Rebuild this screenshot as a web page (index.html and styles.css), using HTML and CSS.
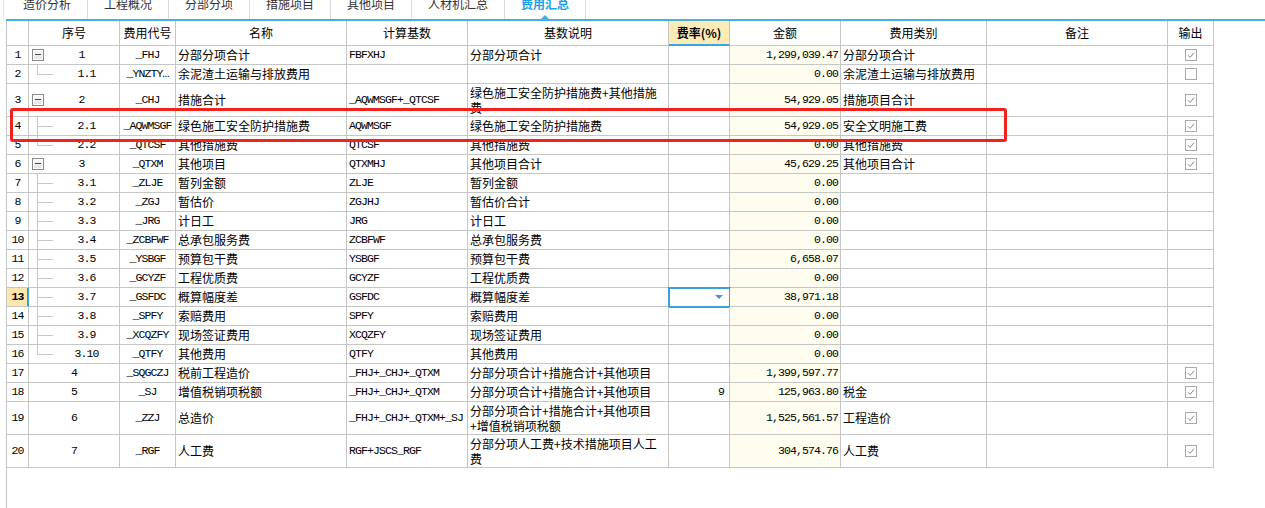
FILE: index.html
```html
<!DOCTYPE html>
<html lang="zh">
<head>
<meta charset="utf-8">
<title>费用汇总</title>
<link rel="stylesheet" href="styles.css">
</head>
<body>
<div class="tabs">
  <div class="tab first"><span>造价分析</span></div>
  <div class="tab"><span>工程概况</span></div>
  <div class="tab"><span>分部分项</span></div>
  <div class="tab"><span>措施项目</span></div>
  <div class="tab"><span>其他项目</span></div>
  <div class="tab"><span>人材机汇总</span></div>
  <div class="tab active"><span>费用汇总</span></div>
</div>
<div class="bar"></div>
<div class="panel">
  <div class="row hdr">
    <div></div><div>序号</div><div>费用代号</div><div>名称</div><div>计算基数</div><div>基数说明</div><div class="rate-h">费率(%)</div><div>金额</div><div>费用类别</div><div>备注</div><div>输出</div>
  </div>

  <div class="row">
    <div class="num m">1</div><div class="seq"><i class="exp"></i><span class="m">1</span></div><div class="c m">_FHJ</div><div>分部分项合计</div><div class="m">FBFXHJ</div><div>分部分项合计</div><div></div><div class="amt m">1,299,039.47</div><div>分部分项合计</div><div></div><div class="chk"><svg width="12" height="12" viewBox="0 0 12 12"><rect x="0.5" y="0.5" width="11" height="11" fill="#fff" stroke="#a9a9a9"/><path d="M3 6.2 L5.2 8.4 L9 3.6" fill="none" stroke="#8c8c8c"/></svg></div>
  </div>
  <div class="row">
    <div class="num m">2</div><div class="seq"><i class="br last"></i><span class="m">1.1</span></div><div class="c m">_YNZTY…</div><div>余泥渣土运输与排放费用</div><div class="m"></div><div></div><div></div><div class="amt m">0.00</div><div>余泥渣土运输与排放费用</div><div></div><div class="chk"><svg width="12" height="12" viewBox="0 0 12 12"><rect x="0.5" y="0.5" width="11" height="11" fill="#fff" stroke="#a9a9a9"/></svg></div>
  </div>
  <div class="row tall">
    <div class="num m">3</div><div class="seq"><i class="exp"></i><span class="m">2</span></div><div class="c m">_CHJ</div><div>措施合计</div><div class="m">_AQWMSGF+_QTCSF</div><div class="wrap">绿色施工安全防护措施费+其他措施<br>费</div><div></div><div class="amt m">54,929.05</div><div>措施项目合计</div><div></div><div class="chk"><svg width="12" height="12" viewBox="0 0 12 12"><rect x="0.5" y="0.5" width="11" height="11" fill="#fff" stroke="#a9a9a9"/><path d="M3 6.2 L5.2 8.4 L9 3.6" fill="none" stroke="#8c8c8c"/></svg></div>
  </div>
  <div class="row">
    <div class="num m">4</div><div class="seq"><i class="br"></i><span class="m">2.1</span></div><div class="c m">_AQWMSGF</div><div>绿色施工安全防护措施费</div><div class="m">AQWMSGF</div><div>绿色施工安全防护措施费</div><div></div><div class="amt m">54,929.05</div><div>安全文明施工费</div><div></div><div class="chk"><svg width="12" height="12" viewBox="0 0 12 12"><rect x="0.5" y="0.5" width="11" height="11" fill="#fff" stroke="#a9a9a9"/><path d="M3 6.2 L5.2 8.4 L9 3.6" fill="none" stroke="#8c8c8c"/></svg></div>
  </div>
  <div class="row">
    <div class="num m">5</div><div class="seq"><i class="br last"></i><span class="m">2.2</span></div><div class="c m">_QTCSF</div><div>其他措施费</div><div class="m">QTCSF</div><div>其他措施费</div><div></div><div class="amt m">0.00</div><div>其他措施费</div><div></div><div class="chk"><svg width="12" height="12" viewBox="0 0 12 12"><rect x="0.5" y="0.5" width="11" height="11" fill="#fff" stroke="#a9a9a9"/><path d="M3 6.2 L5.2 8.4 L9 3.6" fill="none" stroke="#8c8c8c"/></svg></div>
  </div>
  <div class="row">
    <div class="num m">6</div><div class="seq"><i class="exp"></i><span class="m">3</span></div><div class="c m">_QTXM</div><div>其他项目</div><div class="m">QTXMHJ</div><div>其他项目合计</div><div></div><div class="amt m">45,629.25</div><div>其他项目合计</div><div></div><div class="chk"><svg width="12" height="12" viewBox="0 0 12 12"><rect x="0.5" y="0.5" width="11" height="11" fill="#fff" stroke="#a9a9a9"/><path d="M3 6.2 L5.2 8.4 L9 3.6" fill="none" stroke="#8c8c8c"/></svg></div>
  </div>
  <div class="row">
    <div class="num m">7</div><div class="seq"><i class="br"></i><span class="m">3.1</span></div><div class="c m">_ZLJE</div><div>暂列金额</div><div class="m">ZLJE</div><div>暂列金额</div><div></div><div class="amt m">0.00</div><div></div><div></div><div></div>
  </div>
  <div class="row">
    <div class="num m">8</div><div class="seq"><i class="br"></i><span class="m">3.2</span></div><div class="c m">_ZGJ</div><div>暂估价</div><div class="m">ZGJHJ</div><div>暂估价合计</div><div></div><div class="amt m">0.00</div><div></div><div></div><div></div>
  </div>
  <div class="row">
    <div class="num m">9</div><div class="seq"><i class="br"></i><span class="m">3.3</span></div><div class="c m">_JRG</div><div>计日工</div><div class="m">JRG</div><div>计日工</div><div></div><div class="amt m">0.00</div><div></div><div></div><div></div>
  </div>
  <div class="row">
    <div class="num m">10</div><div class="seq"><i class="br"></i><span class="m">3.4</span></div><div class="c m">_ZCBFWF</div><div>总承包服务费</div><div class="m">ZCBFWF</div><div>总承包服务费</div><div></div><div class="amt m">0.00</div><div></div><div></div><div></div>
  </div>
  <div class="row">
    <div class="num m">11</div><div class="seq"><i class="br"></i><span class="m">3.5</span></div><div class="c m">_YSBGF</div><div>预算包干费</div><div class="m">YSBGF</div><div>预算包干费</div><div></div><div class="amt m">6,658.07</div><div></div><div></div><div></div>
  </div>
  <div class="row">
    <div class="num m">12</div><div class="seq"><i class="br"></i><span class="m">3.6</span></div><div class="c m">_GCYZF</div><div>工程优质费</div><div class="m">GCYZF</div><div>工程优质费</div><div></div><div class="amt m">0.00</div><div></div><div></div><div></div>
  </div>
  <div class="row">
    <div class="num m cur">13</div><div class="seq"><i class="br"></i><span class="m">3.7</span></div><div class="c m">_GSFDC</div><div>概算幅度差</div><div class="m">GSFDC</div><div>概算幅度差</div><div class="sel"><i class="dd"></i></div><div class="amt m">38,971.18</div><div></div><div></div><div></div>
  </div>
  <div class="row">
    <div class="num m">14</div><div class="seq"><i class="br"></i><span class="m">3.8</span></div><div class="c m">_SPFY</div><div>索赔费用</div><div class="m">SPFY</div><div>索赔费用</div><div></div><div class="amt m">0.00</div><div></div><div></div><div></div>
  </div>
  <div class="row">
    <div class="num m">15</div><div class="seq"><i class="br"></i><span class="m">3.9</span></div><div class="c m">_XCQZFY</div><div>现场签证费用</div><div class="m">XCQZFY</div><div>现场签证费用</div><div></div><div class="amt m">0.00</div><div></div><div></div><div></div>
  </div>
  <div class="row">
    <div class="num m">16</div><div class="seq"><i class="br last"></i><span class="m">3.10</span></div><div class="c m">_QTFY</div><div>其他费用</div><div class="m">QTFY</div><div>其他费用</div><div></div><div class="amt m">0.00</div><div></div><div></div><div></div>
  </div>
  <div class="row">
    <div class="num m">17</div><div class="seq"><span class="m">4</span></div><div class="c m">_SQGCZJ</div><div>税前工程造价</div><div class="m">_FHJ+_CHJ+_QTXM</div><div>分部分项合计+措施合计+其他项目</div><div></div><div class="amt m">1,399,597.77</div><div></div><div></div><div class="chk"><svg width="12" height="12" viewBox="0 0 12 12"><rect x="0.5" y="0.5" width="11" height="11" fill="#fff" stroke="#a9a9a9"/><path d="M3 6.2 L5.2 8.4 L9 3.6" fill="none" stroke="#8c8c8c"/></svg></div>
  </div>
  <div class="row">
    <div class="num m">18</div><div class="seq"><span class="m">5</span></div><div class="c m">_SJ</div><div>增值税销项税额</div><div class="m">_FHJ+_CHJ+_QTXM</div><div>分部分项合计+措施合计+其他项目</div><div class="r m rate">9</div><div class="amt m">125,963.80</div><div>税金</div><div></div><div class="chk"><svg width="12" height="12" viewBox="0 0 12 12"><rect x="0.5" y="0.5" width="11" height="11" fill="#fff" stroke="#a9a9a9"/><path d="M3 6.2 L5.2 8.4 L9 3.6" fill="none" stroke="#8c8c8c"/></svg></div>
  </div>
  <div class="row tall">
    <div class="num m">19</div><div class="seq"><span class="m">6</span></div><div class="c m">_ZZJ</div><div>总造价</div><div class="m">_FHJ+_CHJ+_QTXM+_SJ</div><div class="wrap">分部分项合计+措施合计+其他项目<br>+增值税销项税额</div><div></div><div class="amt m">1,525,561.57</div><div>工程造价</div><div></div><div class="chk"><svg width="12" height="12" viewBox="0 0 12 12"><rect x="0.5" y="0.5" width="11" height="11" fill="#fff" stroke="#a9a9a9"/><path d="M3 6.2 L5.2 8.4 L9 3.6" fill="none" stroke="#8c8c8c"/></svg></div>
  </div>
  <div class="row tall">
    <div class="num m">20</div><div class="seq"><span class="m">7</span></div><div class="c m">_RGF</div><div>人工费</div><div class="m">RGF+JSCS_RGF</div><div class="wrap">分部分项人工费+技术措施项目人工<br>费</div><div></div><div class="amt m">304,574.76</div><div>人工费</div><div></div><div class="chk"><svg width="12" height="12" viewBox="0 0 12 12"><rect x="0.5" y="0.5" width="11" height="11" fill="#fff" stroke="#a9a9a9"/><path d="M3 6.2 L5.2 8.4 L9 3.6" fill="none" stroke="#8c8c8c"/></svg></div>
  </div>
</div>
<div class="mark"></div>
</body>
</html>
```
FILE: styles.css
```css
html, body {
  margin: 0;
  padding: 0;
}
body {
  position: relative;
  width: 1265px;
  height: 508px;
  overflow: hidden;
  background: #fff;
  color: #000;
  font-family: "Noto Sans CJK SC", "Noto Sans", sans-serif;
  font-size: 12px;
}

/* tab strip */
.tabs {
  display: flex;
  height: 19px;
  padding-left: 3px;
  overflow: hidden;
}
.tab {
  position: relative;
  padding: 0 16px;
  border-right: 1px solid #dcdcdc;
  color: #333;
  line-height: 12px;
}
.tab span {
  display: block;
  margin-top: -2px;
}
.tab.first {
  padding-left: 19px;
  border-left: 1px solid #e2e2e2;
}
.tab.active {
  color: #1d9fe3;
  font-weight: bold;
}
.tab.active::after {
  content: "";
  position: absolute;
  left: 50%;
  bottom: 0;
  margin-left: -4px;
  border-left: 4px solid transparent;
  border-right: 4px solid transparent;
  border-bottom: 4px solid #3aaee6;
}
.bar {
  height: 2px;
  margin-left: 6px;
  background: #46b0e2;
}

/* grid */
.panel {
  margin-left: 6px;
  height: 487px;
  border-left: 1px solid #c6c6c6;
}
.row {
  display: grid;
  grid-template-columns: 22px 91px 56px 171px 121px 201px 61px 111px 146px 181px 46px;
  width: 1207px;
  height: 19px;
}
.row.tall {
  height: 33px;
}
.row > div {
  box-sizing: border-box;
  display: flex;
  align-items: center;
  padding: 0 2px;
  border-right: 1px solid #c6c6c6;
  border-bottom: 1px solid #c6c6c6;
  overflow: hidden;
  white-space: nowrap;
  line-height: 14px;
}
.row.hdr {
  height: 25px;
}
.row.hdr > div {
  justify-content: center;
}
.row.hdr > .rate-h {
  background: #fdebb8;
  font-weight: bold;
  border-bottom: 2px solid #38a5de;
}

.m {
  font-family: "Liberation Mono", "DejaVu Sans Mono", monospace;
  font-size: 11.5px;
  letter-spacing: -0.9px;
}
.row > .c {
  justify-content: center;
}
.row > .r {
  justify-content: flex-end;
}
.row > .num {
  justify-content: center;
  padding: 0;
}
.row > .num.cur {
  background: #fde7ad;
  font-weight: bold;
  border-right-color: #3aa0dc;
  box-shadow: inset -1px 0 0 #3aa0dc;
}
.row > .seq {
  padding: 0;
  align-items: stretch;
}
.seq span {
  flex: 1;
  display: flex;
  align-items: center;
  justify-content: center;
}
.exp {
  flex: none;
  align-self: center;
  position: relative;
  box-sizing: border-box;
  width: 12px;
  height: 12px;
  margin-left: 3px;
  border: 1px solid #8a8a8a;
  background: linear-gradient(#fbfbfb, #e2e2e2);
  box-shadow: inset 0 0 0 1px #fff;
}
.exp::after {
  content: "";
  position: absolute;
  left: 2px;
  right: 2px;
  top: 4px;
  border-top: 1px solid #4a4a4a;
}
.br {
  flex: none;
  position: relative;
  width: 25px;
}
.br::before {
  content: "";
  position: absolute;
  left: 8px;
  top: 0;
  bottom: 0;
  border-left: 1px solid #c8c8c8;
}
.br.last::before {
  bottom: 50%;
}
.br::after {
  content: "";
  position: absolute;
  left: 8px;
  width: 16px;
  top: 50%;
  border-top: 1px solid #c8c8c8;
}
.row > .amt {
  justify-content: flex-end;
  background: #fffdf0;
  padding-right: 2px;
}
.row > .rate {
  padding-right: 5px;
}
.row > .wrap {
  white-space: normal;
  align-items: center;
  line-height: 15px;
}
.row > .chk {
  justify-content: center;
  padding: 0;
}
.chk svg {
  display: block;
}
.row > .sel {
  outline: 2px solid #3aa0dc;
  outline-offset: -1px;
  justify-content: flex-end;
}
.dd {
  width: 0;
  height: 0;
  margin-right: 4px;
  border-left: 4px solid transparent;
  border-right: 4px solid transparent;
  border-top: 4px solid #5b8fc7;
}

/* red annotation box */
.mark {
  position: absolute;
  left: 10px;
  top: 108px;
  width: 997px;
  height: 34px;
  box-sizing: border-box;
  border: 3px solid #f2231d;
  border-radius: 3px;
}
```
